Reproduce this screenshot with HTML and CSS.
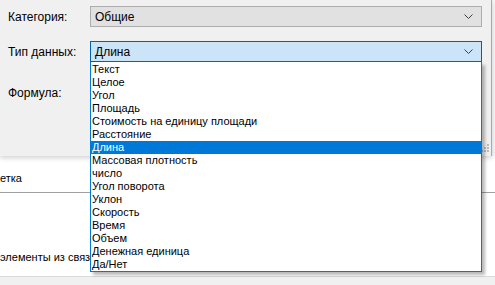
FILE: index.html
```html
<!DOCTYPE html>
<html lang="ru">

<head>
    <meta charset="UTF-8">
    <title>Параметры</title>
    <link rel="stylesheet" href="styles.css">
</head>

<body>
    <div class="screen">
        <div class="dialog">
            <div class="form">
                <label class="label">Категория:</label>
                <div class="combo">
                    <span>Общие</span>
                    <svg class="chevron" width="9" height="5" viewBox="0 0 9 5"><path d="M0.5 0.5 L4.5 4.5 L8.5 0.5" /></svg>
                </div>

                <label class="label">Тип данных:</label>
                <div class="combo-wrap">
                    <div class="combo open">
                        <span>Длина</span>
                        <svg class="chevron" width="9" height="5" viewBox="0 0 9 5"><path d="M0.5 0.5 L4.5 4.5 L8.5 0.5" /></svg>
                    </div>
                    <ul class="dropdown">
                        <li>Текст</li>
                        <li>Целое</li>
                        <li>Угол</li>
                        <li>Площадь</li>
                        <li>Стоимость на единицу площади</li>
                        <li>Расстояние</li>
                        <li class="selected">Длина</li>
                        <li>Массовая плотность</li>
                        <li>число</li>
                        <li>Угол поворота</li>
                        <li>Уклон</li>
                        <li>Скорость</li>
                        <li>Время</li>
                        <li>Объем</li>
                        <li>Денежная единица</li>
                        <li>Да/Нет</li>
                    </ul>
                </div>

                <label class="label formula">Формула:</label>
                <div></div>
            </div>
            <svg class="grip" width="9" height="9" viewBox="0 0 9 9">
                <rect x="6" y="0" width="2" height="2" />
                <rect x="3" y="3" width="2" height="2" />
                <rect x="6" y="3" width="2" height="2" />
                <rect x="0" y="6" width="2" height="2" />
                <rect x="3" y="6" width="2" height="2" />
                <rect x="6" y="6" width="2" height="2" />
            </svg>
        </div>

        <div class="panel">
            <div class="panel-row">етка</div>
            <div class="panel-text">элементы из связе</div>
        </div>
        <div class="statusbar"></div>
    </div>
</body>

</html>
```

FILE: styles.css
```css
* {
    margin: 0;
    padding: 0;
    box-sizing: border-box;
}

body {
    width: 495px;
    height: 285px;
    overflow: hidden;
    background: #f7f7f7;
    font-family: 'Liberation Sans', Arial, sans-serif;
    font-size: 12px;
    color: #000;
}

.screen {
    display: flex;
    flex-direction: column;
    height: 285px;
}

.dialog {
    position: relative;
    width: 492px;
    height: 156px;
    background: #f0f0f0;
    border-right: 1px solid #a9a9a9;
    box-shadow: 0 2px 5px rgba(0, 0, 0, 0.18);
    z-index: 2;
}

.form {
    display: grid;
    grid-template-columns: 82px 392px;
    grid-auto-rows: 21px;
    row-gap: 14px;
    padding: 6px 0 0 8px;
}

.label {
    display: flex;
    align-items: center;
    white-space: nowrap;
}

.label.formula {
    position: relative;
    top: 6px;
}

.combo {
    display: flex;
    align-items: center;
    justify-content: space-between;
    height: 21px;
    padding: 0 8px 0 4px;
    background: #e1e1e1;
    border: 1px solid #adadad;
}

.combo.open {
    background: #cce4f7;
    border-color: #0063b1;
}

.chevron path {
    fill: none;
    stroke: #404040;
    stroke-width: 1;
}

.combo-wrap {
    position: relative;
}

.dropdown {
    position: absolute;
    top: 21px;
    left: 0;
    width: 392px;
    list-style: none;
    background: #fff;
    border: 1px solid #0078d7;
    border-top: none;
    box-shadow: 3px 3px 3px rgba(0, 0, 0, 0.28);
    font-size: 11px;
    z-index: 3;
}

.dropdown li {
    height: 13px;
    line-height: 13px;
    padding-left: 1px;
    white-space: nowrap;
}

.dropdown li:first-child {
    margin-top: 1px;
}

.dropdown li.selected {
    background: #0078d7;
    color: #fff;
}

.grip {
    position: absolute;
    right: 1px;
    bottom: 3px;
}

.grip rect {
    fill: #bcbcbc;
}

.panel {
    flex: 1;
    background: #fff;
    font-size: 11px;
}

.panel-row {
    height: 37px;
    padding: 15px 0 0 0;
    line-height: 14px;
    border-bottom: 1px solid #a0a0a0;
}

.panel-text {
    width: 90px;
    overflow: hidden;
    padding-top: 57px;
    line-height: 14px;
    white-space: nowrap;
}

.statusbar {
    height: 9px;
    background: #f0f0f0;
    border-top: 1px solid #dadada;
}
```
